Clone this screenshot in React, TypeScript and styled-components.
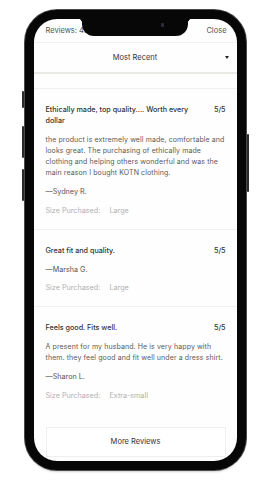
import { type FC } from 'react'
import styled, { createGlobalStyle } from 'styled-components'

type Review = {
  id: number
  title: string
  rating: string
  body?: string
  author: string
  size: string
}

const reviews: Review[] = [
  {
    id: 1,
    title: 'Ethically made, top quality.... Worth every dollar',
    rating: '5/5',
    body: 'the product is extremely well made, comfortable and looks great. The purchasing of ethically made clothing and helping others wonderful and was the main reason I bought KOTN clothing.',
    author: 'Sydney R.',
    size: 'Large',
  },
  {
    id: 2,
    title: 'Great fit and quality.',
    rating: '5/5',
    author: 'Marsha G.',
    size: 'Large',
  },
  {
    id: 3,
    title: 'Feels good. Fits well.',
    rating: '5/5',
    body: 'A present for my husband. He is very happy with them. they feel good and fit well under a dress shirt.',
    author: 'Sharon L.',
    size: 'Extra-small',
  },
]

const GlobalStyle = createGlobalStyle`
  html, body {
    margin: 0;
    padding: 0;
    background: #ffffff;
  }
  body {
    font-family: Inter, 'Liberation Sans', sans-serif;
    -webkit-font-smoothing: antialiased;
  }
`

const Page = styled.div`
  width: 270px;
  height: 480px;
  display: flex;
  justify-content: center;
  padding-top: 10px;
  box-sizing: border-box;
`

const Phone = styled.div`
  position: relative;
  width: 221px;
  height: 460px;
  box-sizing: border-box;
  border: 9px solid #070707;
  border-radius: 32px;
  box-shadow:
    0 0 0 1px #4a4a4a,
    0 3px 2px -1px rgba(0, 0, 0, 0.18);
  background: #070707;
`

const SideButton = styled.span<{ $side: 'left' | 'right'; $top: number; $len: number }>`
  position: absolute;
  ${({ $side }) => ($side === 'left' ? 'left: -12px;' : 'right: -12px;')}
  top: ${({ $top }) => $top}px;
  width: 2px;
  height: ${({ $len }) => $len}px;
  background: #2a2a2a;
  border-radius: 1px;
`

const Screen = styled.div`
  width: 100%;
  height: 100%;
  border-radius: 23px;
  overflow: hidden;
  background: #fefefe;
  display: flex;
  flex-direction: column;
`

const Notch = styled.div`
  position: absolute;
  top: -1px;
  left: 50%;
  transform: translateX(-50%);
  width: 106px;
  height: 18px;
  background: #070707;
  border-radius: 0 0 12px 12px;

  &::before,
  &::after {
    content: '';
    position: absolute;
    top: 0;
    width: 6px;
    height: 6px;
  }
  &::before {
    left: -6px;
    background: radial-gradient(circle at 0 100%, transparent 6px, #070707 6.5px);
  }
  &::after {
    right: -6px;
    background: radial-gradient(circle at 100% 100%, transparent 6px, #070707 6.5px);
  }
`

const Camera = styled.span`
  position: absolute;
  top: 5px;
  right: 24px;
  width: 3px;
  height: 4px;
  border-radius: 1px;
  background: #2d2d3a;
`

const Header = styled.div`
  display: flex;
  justify-content: space-between;
  padding: 6px 10px 6px 12px;
  font-size: 7.5px;
  line-height: 11px;
  color: #555;
  border-bottom: 1px solid #f1f1f1;
`

const SortRow = styled.div`
  position: relative;
  height: 29px;
  display: flex;
  align-items: center;
  justify-content: center;
  font-size: 7.5px;
  color: #333;
  border-bottom: 2px solid #ebe9e6;
`

const Caret = styled.span`
  position: absolute;
  right: 8px;
  top: 13px;
  width: 0;
  height: 0;
  border-left: 2.5px solid transparent;
  border-right: 2.5px solid transparent;
  border-top: 3px solid #222;
`

const Spacer = styled.div`
  height: 14px;
  flex-shrink: 0;
  border-bottom: 1px solid #f1f1f1;
`

const ReviewItem = styled.article<{ $last?: boolean }>`
  display: flex;
  flex-direction: column;
  gap: 7.5px;
  padding: 16px 11px 13px 12px;
  border-bottom: ${({ $last }) => ($last ? 'none' : '1px solid #f1f1f1')};
`

const TitleRow = styled.div`
  display: flex;
  justify-content: space-between;
  gap: 16px;
  font-size: 7.2px;
  line-height: 10.5px;
  font-weight: 500;
  color: #333;
`

const Body = styled.p`
  margin: 0;
  font-size: 7px;
  letter-spacing: 0.1px;
  line-height: 11.3px;
  color: #5a5a5a;
`

const Author = styled.div`
  font-size: 7.2px;
  line-height: 11px;
  color: #555;
`

const SizeLine = styled.div`
  display: flex;
  font-size: 7.2px;
  line-height: 11px;
  color: #b0b0b0;

  span:first-child {
    width: 64px;
  }
`

const Footer = styled.div`
  padding: 13px 11px 0 12px;
`

const MoreButton = styled.button`
  width: 100%;
  height: 30px;
  background: #fff;
  border: 1px solid #eeeeee;
  font-family: inherit;
  font-size: 7.5px;
  color: #333;
`

const App: FC = () => (
  <Page>
    <GlobalStyle />
    <Phone>
      <SideButton $side="left" $top={72} $len={17} />
      <SideButton $side="left" $top={107} $len={32} />
      <SideButton $side="left" $top={150} $len={32} />
      <SideButton $side="right" $top={115} $len={58} />
      <Screen>
        <Header>
          <span>Reviews: 43</span>
          <span>Close</span>
        </Header>
        <SortRow>
          Most Recent
          <Caret />
        </SortRow>
        <Spacer />
        {reviews.map((r, i) => (
          <ReviewItem key={r.id} $last={i === reviews.length - 1}>
            <TitleRow>
              <span>{r.title}</span>
              <span>{r.rating}</span>
            </TitleRow>
            {r.body && <Body>{r.body}</Body>}
            <Author>—{r.author}</Author>
            <SizeLine>
              <span>Size Purchased:</span>
              <span>{r.size}</span>
            </SizeLine>
          </ReviewItem>
        ))}
        <Footer>
          <MoreButton>More Reviews</MoreButton>
        </Footer>
      </Screen>
      <Notch>
        <Camera />
      </Notch>
    </Phone>
  </Page>
)

export default App
